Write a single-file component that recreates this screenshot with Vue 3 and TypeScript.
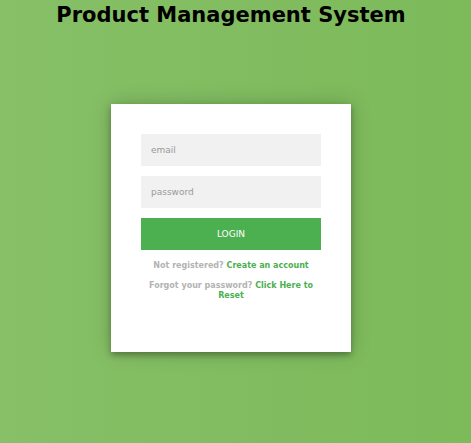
<script setup lang="ts">
import { ref } from 'vue'

const email = ref<string>('')
const password = ref<string>('')
</script>

<template>
  <main class="page">
    <h1 class="title">Product Management System</h1>
    <section class="card">
      <form class="form" @submit.prevent>
        <input v-model="email" class="field" type="email" placeholder="email" aria-label="email" />
        <input v-model="password" class="field" type="password" placeholder="password" aria-label="password" />
        <button class="submit" type="submit">LOGIN</button>
        <div class="messages">
          <p class="message">Not registered? <a href="#">Create an account</a></p>
          <p class="message">Forgot your password? <a href="#">Click Here to Reset</a></p>
        </div>
      </form>
    </section>
  </main>
</template>

<style>
body {
  margin: 0;
}
</style>

<style scoped>
.page {
  box-sizing: border-box;
  min-height: 100vh;
  padding: 3px 29px 20px 20px;
  background: linear-gradient(to left, #7cba5a, #87c067);
  font-family: "DejaVu Sans", sans-serif;
}

.title {
  margin: 0;
  color: #000;
  font-size: 21px;
  line-height: 25px;
  text-align: center;
}

.card {
  box-sizing: border-box;
  max-width: 240px;
  margin: 76px auto 0;
  padding: 30px 30px 51px;
  background: #fff;
  box-shadow: 0 0 20px rgba(0, 0, 0, 0.2), 0 3px 6px rgba(0, 0, 0, 0.3);
}

.form {
  display: flex;
  flex-direction: column;
  gap: 10px;
  text-align: center;
}

.field,
.submit {
  box-sizing: border-box;
  width: 100%;
  height: 32px;
  margin: 0;
  padding: 0 10px;
  border: 0;
  border-radius: 0;
  outline: 0;
  font-family: inherit;
  font-size: 9px;
}

.field {
  background: #f1f1f1;
  color: #333;
}

.field::placeholder {
  color: #999;
  opacity: 1;
}

.submit {
  background: #4caf50;
  color: #fff;
  cursor: pointer;
}

.messages {
  display: flex;
  flex-direction: column;
  gap: 10px;
  padding-top: 1px;
}

.message {
  margin: 0;
  color: #b3b3b3;
  font-size: 8px;
  font-weight: 700;
  line-height: 10px;
}

.message a {
  color: #4caf50;
  text-decoration: none;
}
</style>
